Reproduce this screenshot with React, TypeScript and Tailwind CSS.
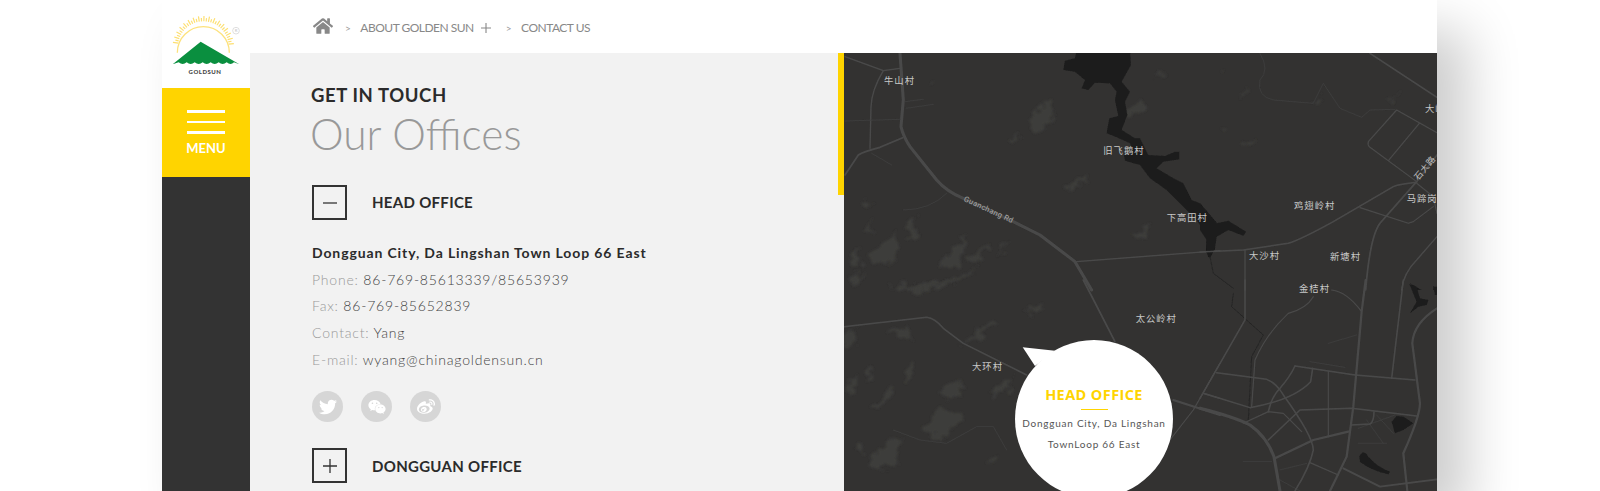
import { FaHome, FaTwitter, FaWeibo, FaWeixin } from 'react-icons/fa'

const RAYS = Array.from({ length: 33 }, (_, i) => {
  const a = ((188 + i * 5.2) * Math.PI) / 180
  const long = i % 2 === 0
  return {
    x1: 130 + 76 * Math.cos(a),
    y1: 140 + 76 * Math.sin(a),
    x2: 130 + (long ? 92 : 86) * Math.cos(a),
    y2: 140 + (long ? 92 : 86) * Math.sin(a),
  }
})

function Logo() {
  return (
    <svg viewBox="6 0 264 264" className="w-[88px] h-[88px] block">
      <path d="M52 158 A78 78 0 0 1 208 158" fill="none" stroke="#fde27c" strokeWidth="4" />
      {RAYS.map((r, i) => (
        <line key={i} x1={r.x1} y1={r.y1} x2={r.x2} y2={r.y2} stroke="#fddf70" strokeWidth="3.5" />
      ))}
      <path
        d="M38 193 L122 125 L238 193 L222 187 Q212 197 200 187 Q188 197 176 187 Q164 197 152 187 Q140 197 128 187 Q116 197 104 187 Q92 197 80 187 Q68 197 56 187 Z"
        fill="#0a8f3f"
      />
      <circle cx="228" cy="92" r="10" fill="none" stroke="#cfcfcf" strokeWidth="2" />
      <text x="228" y="97" textAnchor="middle" fontSize="13" fill="#c4c4c4" fontFamily="Lato, sans-serif">R</text>
      <text x="135" y="223" textAnchor="middle" fontSize="18" fontWeight="900" letterSpacing="1.5" fill="#444" fontFamily="Lato, sans-serif">GOLDSUN</text>
    </svg>
  )
}

function Sidebar() {
  return (
    <aside className="w-[88px] shrink-0 flex flex-col bg-[#333333]">
      <div className="bg-white h-[88px]">
        <Logo />
      </div>
      <div className="h-[89px] bg-[#ffd400] flex flex-col items-center pt-[22px]">
        <div className="w-[38px] flex flex-col gap-[8px]">
          <div className="h-[2.5px] bg-white" />
          <div className="h-[2.5px] bg-white" />
          <div className="h-[2.5px] bg-white" />
        </div>
        <span className="mt-[4px] text-[13px] leading-[20px] font-bold text-white">MENU</span>
      </div>
    </aside>
  )
}

function Breadcrumb() {
  return (
    <nav className="h-[53px] bg-white flex items-center pl-[63px] pt-[3px] text-[12px] tracking-[-0.5px] text-[#888888]">
      <FaHome className="text-[20px] text-[#888888] -mt-[4px]" />
      <span className="ml-[12px] text-[10px] text-[#999999]">&gt;</span>
      <span className="ml-[10px]">ABOUT GOLDEN SUN</span>
      <svg viewBox="0 0 10 10" className="ml-[7px] w-[10px] h-[10px]">
        <path d="M5 0V10M0 5H10" stroke="#888888" strokeWidth="1.1" fill="none" />
      </svg>
      <span className="ml-[15px] text-[10px] text-[#999999]">&gt;</span>
      <span className="ml-[10px]">CONTACT US</span>
    </nav>
  )
}

function ToggleBox({ open }: { open: boolean }) {
  return (
    <div className="w-[35px] h-[35px] border-2 border-[#333333] flex items-center justify-center shrink-0">
      <svg viewBox="0 0 14 14" className="w-[14px] h-[14px]">
        <path d={open ? 'M0 7H14' : 'M7 0V14M0 7H14'} stroke="#333333" strokeWidth="1.3" fill="none" />
      </svg>
    </div>
  )
}

function OfficeHeader({ title, open }: { title: string; open?: boolean }) {
  return (
    <div className="flex items-center gap-[25px]">
      <ToggleBox open={!!open} />
      <h3 className="text-[15px] font-bold tracking-[0.3px] text-[#2b2b2b]">{title}</h3>
    </div>
  )
}

const ROWS = [
  { label: 'Phone:', value: '86-769-85613339/85653939' },
  { label: 'Fax:', value: '86-769-85652839' },
  { label: 'Contact:', value: 'Yang' },
  { label: 'E-mail:', value: 'wyang@chinagoldensun.cn' },
]

function Social({ children }: { children: React.ReactNode }) {
  return (
    <div className="w-[31px] h-[31px] rounded-full bg-[#d6d6d6] flex items-center justify-center text-white text-[18px]">
      {children}
    </div>
  )
}

function OfficesPanel() {
  return (
    <section className="relative w-[594px] shrink-0 bg-[#f2f2f2] pl-[61px] pt-[30px] overflow-hidden">
      <div className="absolute right-0 top-0 w-[6px] h-[142px] bg-[#ffd400]" />
      <h2 className="text-[18.5px] leading-[24px] font-bold tracking-[0.6px] text-[#2b2b2b]">GET IN TOUCH</h2>
      <h1 className="mt-[2px] text-[42.5px] leading-[50px] font-light text-[#999999] -ml-px">Our Offices</h1>
      <div className="mt-[26px] pl-[1px]">
        <OfficeHeader title="HEAD OFFICE" open />
        <div className="mt-[20px] text-[14px] leading-[26.67px] tracking-[0.8px]">
          <p className="font-bold text-[#2b2b2b] tracking-[0.88px]">Dongguan City, Da Lingshan Town Loop 66 East</p>
          {ROWS.map(r => (
            <p key={r.label} className="text-[#444444] font-light">
              <span className="text-[#999999]">{r.label}</span> <span>{r.value}</span>
            </p>
          ))}
        </div>
        <div className="mt-[18px] flex gap-[18px]">
          <Social><FaTwitter /></Social>
          <Social><FaWeixin /></Social>
          <Social><FaWeibo /></Social>
        </div>
        <div className="mt-[26px]">
          <OfficeHeader title="DONGGUAN OFFICE" />
        </div>
      </div>
    </section>
  )
}

// paths below are written in 3x crop coordinates, one group per quadrant of the map
const ROAD = '#4a4a4a'
const FAINT = '#3f3f3e'
const BLOB = '#3c3c3b'

function Label({ x, y, children }: { x: number; y: number; children: string }) {
  return (
    <text x={x} y={y} fontSize="28" letterSpacing="3" fill="#c8c8c8" fontFamily="'Noto Sans CJK SC', sans-serif">
      {children}
    </text>
  )
}

function MapArt() {
  return (
    <svg viewBox="844 53 593 438" className="block w-[593px] h-[438px]">
      <defs>
        <filter id="soft" x="-5%" y="-5%" width="110%" height="110%">
          <feGaussianBlur stdDeviation="1.4" />
        </filter>
        <filter id="terrain" x="-5%" y="-5%" width="110%" height="110%">
          <feTurbulence type="fractalNoise" baseFrequency="0.03" numOctaves="3" seed="4" />
          <feDisplacementMap in="SourceGraphic" scale="55" xChannelSelector="R" yChannelSelector="G" />
          <feGaussianBlur stdDeviation="2.5" />
        </filter>
      </defs>
      <rect x="844" y="53" width="593" height="438" fill="#333231" />

      <g transform="translate(820 40) scale(0.3333)" fill={BLOB} filter="url(#terrain)">
        <path d="M630 270 L640 210 L690 178 L700 230 L665 280 Z" />
        <path d="M730 440 L800 410 L810 420 L750 447 Z" />
        <path d="M920 220 L970 170 L975 215 L940 235 Z" />
        <path d="M950 590 L985 555 L975 595 L955 600 Z" />
        <path d="M350 670 L440 580 L420 690 L370 690 Z" />
        <path d="M140 640 L200 610 L230 570 L225 660 L160 680 Z" />
        <path d="M90 640 L120 625 L130 690 L90 680 Z" />
        <path d="M440 660 L505 610 L470 670 Z" />
        <path d="M130 575 L160 540 L160 580 Z" />
        <path d="M262 550 L290 525 L285 590 L262 600 Z" />
        <path d="M80 710 L140 700 L100 735 Z" />
        <path d="M270 740 L480 690 L400 725 L300 750 Z" />
        <path d="M540 650 L575 600 L550 625 Z" />
        <path d="M565 300 L600 290 L580 315 Z" />
        <path d="M330 135 L352 115 L340 140 Z" />
        <path d="M1000 115 L1040 95 L1020 118 Z" />
        <path d="M120 490 L160 480 L150 500 L125 500 Z" />
      </g>
      <g transform="translate(820 40) scale(0.3333)" fill="none" strokeLinejoin="round" strokeLinecap="round" filter="url(#soft)">
        <path
          d="M770 30 L930 30 L933 75 L905 125 L930 155 L915 185 L922 225 L905 270 L945 295 L960 295 L985 345 L1035 348 L1065 335 L1078 335 L1078 358 L1030 365 L1010 385 L1060 415 L1090 430 L1115 480 L1140 490 L1200 560 L1200 578 L1185 580 L1185 630 L1165 652 L1158 630 L1160 585 L1130 540 L1080 490 L1040 450 L990 415 L960 375 L915 362 L912 345 L940 340 L930 310 L890 292 L860 280 L868 235 L895 228 L885 180 L890 155 L870 130 L825 128 L805 150 L785 145 L795 120 L765 95 L730 90 L735 62 L765 55 Z"
          fill="#1c1c1c"
        />
        <path d="M240 40 L250 180 L243 260 Q250 290 270 320 L350 420 Q380 455 430 475 L580 545 L660 585 L765 665 L815 750" stroke={ROAD} strokeWidth="9" />
        <path d="M75 50 L190 92 L240 85" stroke={ROAD} strokeWidth="4" />
        <path d="M190 92 Q155 150 153 200 L150 325" stroke={ROAD} strokeWidth="4" />
        <path d="M75 405 L115 345 Q130 335 180 322 L248 293" stroke={ROAD} strokeWidth="5" />
        <path d="M75 243 L240 238 M255 185 L310 178 M258 205 L340 193 M155 340 L215 375 M250 510 Q330 510 380 460" stroke={FAINT} strokeWidth="2.5" />
        <path d="M770 665 L1200 632" stroke={ROAD} strokeWidth="4" />
      </g>

      <g transform="translate(1200 40) scale(0.3333)" fill={BLOB} filter="url(#terrain)">
        <path d="M60 265 L90 258 L85 272 L65 272 Z" />
        <path d="M130 310 L178 295 L165 312 L135 315 Z" />
        <path d="M325 190 L368 165 L345 195 Z" />
        <path d="M565 180 L595 155 L580 180 Z" />
        <path d="M60 90 L82 80 L70 100 Z" />
        <path d="M120 165 L140 140 L130 170 Z" />
      </g>
      <g transform="translate(1200 40) scale(0.3333)" fill="none" strokeLinejoin="round" strokeLinecap="round" filter="url(#soft)">
        <path d="M0 490 L50 550 L85 542 L138 575 L130 587 L85 570 L50 590 L45 625 L30 655 L18 635 L20 600 L0 570 Z" fill="#1c1c1c" />
        <path d="M510 40 L711 172" stroke={ROAD} strokeWidth="5" />
        <path d="M711 278 L590 210 L505 305 Q502 315 510 322 L650 425 M658 250 L567 360" stroke={ROAD} strokeWidth="3.5" />
        <path d="M0 636 L130 630 L265 610 Q300 600 400 545 L580 440 Q600 432 650 427" stroke={ROAD} strokeWidth="4.5" />
        <path d="M711 345 L650 425 L540 550 Q510 590 497 750" stroke={ROAD} strokeWidth="5" />
        <path d="M480 503 L625 550 L640 545 L700 500 M650 430 L700 470 L711 520" stroke={ROAD} strokeWidth="3.5" />
        <path d="M135 630 L135 750" stroke={ROAD} strokeWidth="4" />
        <path d="M711 590 L650 660 Q610 700 605 750" stroke={ROAD} strokeWidth="4" />
        <path d="M180 40 Q210 90 180 120 Q170 170 220 180 L340 190 L370 130 L420 205 L485 232 L510 210 L585 208" stroke={FAINT} strokeWidth="2.5" />
        <path d="M30 650 L40 700 L100 745" stroke="#232323" strokeWidth="2.5" />
        <path d="M630 730 L650 750 L665 750 Z M700 740 L711 740 L711 750 L700 750 Z" fill="#1c1c1c" />
      </g>

      <g transform="translate(820 280) scale(0.3333)" fill={BLOB} filter="url(#terrain)">
        <path d="M430 190 L520 120 L530 135 L470 180 Z" />
        <path d="M610 100 L670 70 L660 90 Z" />
        <path d="M250 270 L290 245 L280 295 L250 310 Z" />
        <path d="M150 390 L210 320 L225 340 L170 385 Z" />
        <path d="M300 460 L370 375 L430 410 L380 470 Z" />
        <path d="M350 340 L420 295 L430 340 L370 360 Z" />
        <path d="M510 340 L580 290 L570 335 Z" />
        <path d="M150 530 L240 470 L230 540 L170 570 Z" />
        <path d="M72 170 L110 150 L105 190 L72 200 Z" />
        <path d="M130 285 L165 270 L150 300 Z" />
        <path d="M210 150 L265 140 L290 185 L240 175 Z" />
        <path d="M498 550 L530 515 L520 555 Z" />
        <path d="M72 340 L105 285 L105 340 Z" />
        <path d="M100 510 L130 500 L125 525 Z" />
        <path d="M200 20 L420 0 L300 40 Z" />
      </g>
      <g transform="translate(820 280) scale(0.3333)" fill="none" strokeLinejoin="round" strokeLinecap="round" filter="url(#soft)">
        <path d="M72 140 L320 112 Q345 115 370 145 L430 190 L620 285" stroke={ROAD} strokeWidth="4.5" />
        <path d="M790 0 L885 185" stroke={ROAD} strokeWidth="5" />
        <path d="M1060 360 L1200 405" stroke={ROAD} strokeWidth="6" />
        <path d="M1200 250 L1120 390 L1050 480 M1150 340 L1200 355" stroke={ROAD} strokeWidth="3.5" />
        <path d="M220 450 L300 480 L380 490 L470 440 L520 440 L560 510" stroke={FAINT} strokeWidth="2.5" />
      </g>

      <g transform="translate(1200 280) scale(0.3333)" fill="none" strokeLinejoin="round" strokeLinecap="round" filter="url(#soft)">
        <path d="M100 40 L95 80 L190 165 L155 230 L145 420" stroke="#232323" strokeWidth="2.5" />
        <path d="M575 425 L590 408 L610 410 L640 430 L610 450 L585 460 Z M478 530 Q490 505 505 530 Q530 560 570 575 L565 583 Q510 570 480 545 Z M628 12 L650 20 L660 55 L685 60 L680 75 L655 80 L630 100 L650 65 Z M700 20 L711 20 L711 45 L705 45 Z" fill="#1c1c1c" />
        <path d="M475 445 L585 405 M475 490 L560 490 M500 420 L550 490 M530 405 L580 460 M385 190 L470 165 M330 245 L435 262 M130 545 L215 545 M240 570 L320 550 M240 600 L300 633" stroke={FAINT} strokeWidth="2.5" />
        <path d="M0 385 Q100 410 150 435 Q200 470 222 530 L240 633" stroke={ROAD} strokeWidth="9" />
        <path d="M497 0 L485 95 L460 380 L440 530 L390 633" stroke={ROAD} strokeWidth="6.5" />
        <path d="M135 0 L135 120 L0 355" stroke={ROAD} strokeWidth="4.5" />
        <path d="M610 0 L575 295" stroke={ROAD} strokeWidth="4.5" />
        <path d="M711 85 Q640 130 637 190 L660 370 Q660 410 610 520 L622 633" stroke={ROAD} strokeWidth="6.5" />
        <path d="M50 278 L200 298 Q230 310 250 345 Q340 470 340 510 Q330 560 285 633" stroke={ROAD} strokeWidth="4.5" />
        <path d="M285 258 L465 285 L645 300" stroke={ROAD} strokeWidth="4.5" />
        <path d="M285 258 Q270 290 240 325 Q215 350 205 395" stroke={ROAD} strokeWidth="4.5" />
        <path d="M338 265 L332 305 Q280 360 150 383 L10 340" stroke={ROAD} strokeWidth="4.5" />
        <path d="M385 275 L385 470" stroke={ROAD} strokeWidth="3.5" />
        <path d="M205 480 L300 390 L455 385 L650 408" stroke={ROAD} strokeWidth="4.5" />
        <path d="M225 535 L340 480 L445 455" stroke={ROAD} strokeWidth="6.5" />
        <path d="M130 430 L205 395 L250 400 L305 455" stroke={ROAD} strokeWidth="3.5" />
        <path d="M455 435 L510 432 Q522 425 522 395" stroke={ROAD} strokeWidth="4.5" />
        <path d="M430 565 L540 620 L711 598" stroke={ROAD} strokeWidth="5.5" />
        <path d="M330 548 L415 585" stroke={ROAD} strokeWidth="3.5" />
        <path d="M395 30 Q440 35 485 95" stroke={ROAD} strokeWidth="3.5" />
        <path d="M340 50 Q320 85 265 100 Q200 160 165 240 L155 380" stroke={ROAD} strokeWidth="3.5" />
      </g>

      <g transform="translate(820 40) scale(0.3333)">
        <Label x={192} y={132}>牛山村</Label>
        <Label x={850} y={342}>旧飞鹅村</Label>
        <Label x={1040} y={542}>下高田村</Label>
        <text x={430} y={482} fontSize="23" letterSpacing="1" fill="#a8a8a8" fontFamily="Roboto, sans-serif" transform="rotate(25 430 482)">
          Guanchang Rd
        </text>
      </g>
      <g transform="translate(1200 40) scale(0.3333)">
        <Label x={675} y={216}>大岭</Label>
        <Label x={282} y={508}>鸡翅岭村</Label>
        <Label x={147} y={657}>大沙村</Label>
        <Label x={390} y={660}>新塘村</Label>
        <Label x={620} y={485}>马蹄岗</Label>
        <Label x={297} y={755}>金桔村</Label>
        <text x={655} y={422} fontSize="26" letterSpacing="2" fill="#c0c0c0" fontFamily="'Noto Sans CJK SC', sans-serif" transform="rotate(-50 655 422)">
          石大路
        </text>
      </g>
      <g transform="translate(820 280) scale(0.3333)">
        <Label x={947} y={127}>太公岭村</Label>
        <Label x={456} y={270}>大环村</Label>
      </g>
    </svg>
  )
}

function Bubble() {
  return (
    <div className="absolute left-[171px] top-[287px] w-[158px] h-[158px] rounded-full bg-white flex flex-col items-center pt-[44px]">
      <svg viewBox="0 0 40 30" className="absolute left-0 top-0 w-[40px] h-[30px]">
        <path d="M7.7 7.3 L40 10.7 L20 26 Z" fill="#ffffff" />
      </svg>
      <h4 className="text-[14.5px] leading-[22px] font-bold tracking-[0.4px] text-[#ffd400] font-['Open_Sans',sans-serif]">HEAD OFFICE</h4>
      <div className="mt-[3px] w-[27px] h-px bg-[#ffd400]" />
      <div className="mt-[3px] text-[10px] leading-[21px] tracking-[0.75px] text-[#555555] text-center whitespace-nowrap">
        <p>Dongguan City, Da Lingshan</p>
        <p>TownLoop 66 East</p>
      </div>
    </div>
  )
}

export default function App() {
  return (
    <div className="h-[491px] overflow-hidden bg-white font-['Lato',sans-serif]">
      <div className="ml-[162px] w-[1275px] h-[491px] flex shadow-[30px_30px_50px_rgba(0,0,0,0.2)]">
        <Sidebar />
        <div className="flex-1 flex flex-col bg-white">
          <Breadcrumb />
          <div className="flex-1 flex min-h-0">
            <OfficesPanel />
            <div className="relative flex-1 overflow-hidden bg-[#333231]">
              <MapArt />
              <Bubble />
            </div>
          </div>
        </div>
      </div>
    </div>
  )
}
